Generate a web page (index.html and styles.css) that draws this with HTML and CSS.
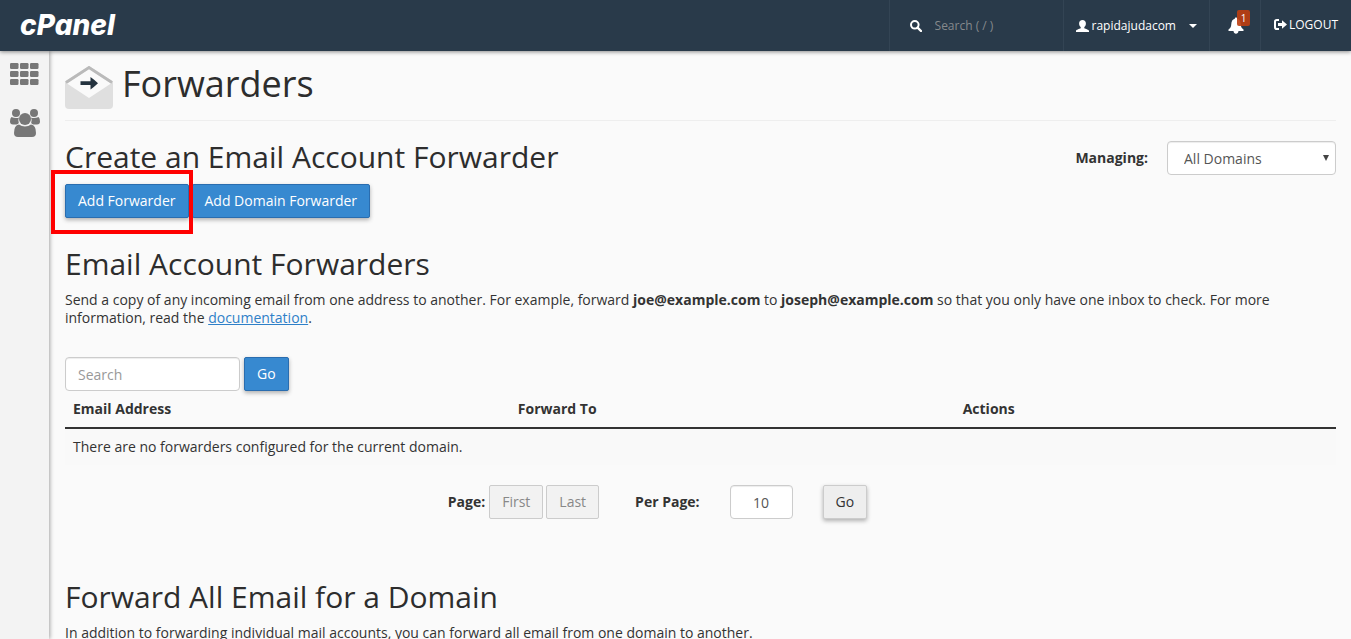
FILE: index.html
```html
<!DOCTYPE html>
<html lang="en">
<head>
<meta charset="utf-8">
<title>cPanel - Forwarders</title>
<link rel="stylesheet" href="styles.css">
</head>
<body>
<header class="topbar">
  <a class="brand" href="#">cPanel</a>
  <nav class="topnav">
    <label class="quick-search">
      <svg width="12" height="12" viewBox="0 0 12 12" aria-hidden="true"><circle cx="4.8" cy="4.8" r="3.8" fill="none" stroke="#fff" stroke-width="2"/><path d="M7.6 7.6l3.4 3.4" stroke="#fff" stroke-width="2.4" stroke-linecap="round"/></svg>
      <input type="text" placeholder="Search ( / )" aria-label="Quick search">
    </label>
    <button class="nav-item user" type="button">
      <svg width="13" height="12" viewBox="0 0 13 12" aria-hidden="true"><path d="M6.5 0C8.600 0 9.900 1.400 9.900 3.400 9.900 5.200 9.100 6.400 8.300 7.100V8.200C9.700 9 13 9.500 13 11V12H0V11C0 9.500 3.300 9 4.700 8.200V7.100C3.900 6.400 3.100 5.200 3.100 3.400 3.100 1.400 4.400 0 6.500 0Z" fill="#fff"/></svg>
      <span>rapidajudacom</span>
      <svg class="caret" width="8" height="4" viewBox="0 0 8 4" aria-hidden="true"><path d="M0 0h8L4 4z" fill="#fff"/></svg>
    </button>
    <button class="nav-item alerts" type="button" aria-label="Notifications">
      <svg width="16" height="17" viewBox="0 0 16 17" aria-hidden="true"><path d="M8 0.500C8.700 0.500 9.200 1 9.200 1.700 11.500 2.300 12.600 4.200 12.700 7 12.800 10 13.800 11.300 15.500 12.600V14H0.500V12.600C2.200 11.300 3.200 10 3.300 7 3.400 4.200 4.500 2.300 6.800 1.700 6.800 1 7.300 0.500 8 0.500ZM5.500 14H10.500C10.300 15.800 9.300 16.700 8 16.700S5.700 15.800 5.500 14Z" fill="#fff"/></svg>
      <span class="badge">1</span>
    </button>
    <a class="nav-item logout" href="#">
      <svg width="13" height="11" viewBox="0 0 13 11" aria-hidden="true"><path d="M5 1H2.800Q1 1 1 2.800V8.200Q1 10 2.800 10H5" fill="none" stroke="#fff" stroke-width="2"/><path d="M4 3.900H8V1.300L13 5.500 8 9.700V7.100H4Z" fill="#fff"/></svg>
      <span>LOGOUT</span>
    </a>
  </nav>
</header>
<div class="shell">
  <aside class="sidebar">
    <a href="#" aria-label="Tools">
      <svg width="29" height="22" viewBox="0 0 29 22" fill="#777"><rect width="8.500" height="6" rx="1.200"/><rect x="10" width="8.500" height="6" rx="1.200"/><rect x="20" width="8.500" height="6" rx="1.200"/><rect y="8" width="8.500" height="6" rx="1.200"/><rect x="10" y="8" width="8.500" height="6" rx="1.200"/><rect x="20" y="8" width="8.500" height="6" rx="1.200"/><rect y="16" width="8.500" height="6" rx="1.200"/><rect x="10" y="16" width="8.500" height="6" rx="1.200"/><rect x="20" y="16" width="8.500" height="6" rx="1.200"/></svg>
    </a>
    <a href="#" aria-label="User manager">
      <svg width="30" height="28" viewBox="0 0 30 28" fill="#777"><circle cx="6" cy="4" r="4"/><circle cx="24" cy="4" r="4"/><path d="M1.500 8Q3.500 9 6 9T9 8.500Q7.700 11 8.800 14 8 15 6.500 15.500H3Q0 15.500 0 12.500 0 9 1.500 8ZM28.500 8Q26.500 9 24 9T21 8.500Q22.300 11 21.200 14 22 15 23.500 15.500H27Q30 15.500 30 12.500 30 9 28.500 8Z"/><circle cx="15" cy="10" r="6"/><path d="M9 15.500Q11.500 17.500 15 17.500T21 15.500Q26 16 26 24 26 28 22 28H8Q4 28 4 24 4 16 9 15.500Z"/></svg>
    </a>
  </aside>
  <main class="content">
    <h1 class="page-title">
      <svg width="48" height="43" viewBox="0 0 48 43" aria-hidden="true"><path d="M0 15.500L24 0 48 15.500V39Q48 43 44 43H4Q0 43 0 39Z" fill="#dfdfdf"/><path d="M2 17.500L24 3 46 17.500 24 32Z" fill="#fafafa"/><path d="M1 16.500L24 1.500 47 16.500" fill="none" stroke="#bababa" stroke-width="2.800"/><path d="M15.500 15.300H25.500V11Q29 13.500 33 17.200 29 21 25.500 23.500V19H15.500Z" fill="#24333f"/></svg>
      <span>Forwarders</span>
    </h1>
    <section class="create">
      <div>
        <h2>Create an Email Account Forwarder</h2>
        <div class="button-row">
          <span class="highlighted"><a class="btn primary" href="#">Add Forwarder</a></span>
          <a class="btn primary" href="#">Add Domain Forwarder</a>
        </div>
      </div>
      <div class="managing">
        <label for="domain">Managing:</label>
        <span class="select-wrap">
          <select id="domain" class="field"><option>All Domains</option></select>
          <svg width="6" height="6" viewBox="0 0 6 6" aria-hidden="true"><path d="M0 0h6L3 6z" fill="#444"/></svg>
        </span>
      </div>
    </section>
    <section class="accounts">
      <h2>Email Account Forwarders</h2>
      <p>Send a copy of any incoming email from one address to another. For example, forward <strong>joe@example.com</strong> to <strong>joseph@example.com</strong> so that you only have one inbox to check. For more information, read the <a href="#">documentation</a>.</p>
      <form class="search-form">
        <input class="field" type="text" placeholder="Search" aria-label="Search forwarders">
        <button class="btn primary" type="button">Go</button>
      </form>
      <table class="forwarders">
        <thead><tr><th>Email Address</th><th>Forward To</th><th>Actions</th></tr></thead>
        <tbody><tr><td colspan="3">There are no forwarders configured for the current domain.</td></tr></tbody>
      </table>
      <form class="pager">
        <div class="pages">
          <strong>Page:</strong>
          <div class="page-buttons">
            <button class="btn" type="button" disabled>First</button>
            <button class="btn" type="button" disabled>Last</button>
          </div>
        </div>
        <div class="per-page">
          <label for="per-page">Per Page:</label>
          <input id="per-page" class="field" type="text" value="10">
          <button class="btn plain" type="button">Go</button>
        </div>
      </form>
    </section>
    <section>
      <h2>Forward All Email for a Domain</h2>
      <p>In addition to forwarding individual mail accounts, you can forward all email from one domain to another.</p>
    </section>
  </main>
</div>
</body>
</html>
```
FILE: styles.css
```css
* { box-sizing: border-box; }
body {
  margin: 0;
  height: 100vh;
  overflow: hidden;
  display: flex;
  flex-direction: column;
  background: #fafafa;
  color: #333;
  font: 14px/18px "Open Sans", sans-serif;
}
button, input, select { font: inherit; color: inherit; }
svg { display: block; flex: none; }
h1, h2 { margin: 0; font-weight: 400; color: #2d2d2d; }
h2 { font-size: 30px; line-height: 34px; }
p { margin: 0; }

.topbar {
  flex: none;
  height: 51px;
  display: flex;
  justify-content: space-between;
  background: #293a4a;
  color: #fff;
  box-shadow: 0 1px 4px rgba(0, 0, 0, .45);
  z-index: 2;
}
.brand {
  padding-left: 20px;
  color: #fff;
  font: italic 800 28px/51px Inter, sans-serif;
  text-decoration: none;
}
.topnav { display: flex; font-size: 12px; }
.quick-search, .nav-item {
  display: flex;
  align-items: center;
  border: 0;
  border-left: 1px solid #334454;
  background: none;
  color: #fff;
  text-decoration: none;
}
.quick-search { width: 174px; padding-left: 20px; gap: 13px; }
.quick-search input {
  width: 120px;
  padding: 0;
  border: 0;
  background: none;
  color: #fff;
}
.quick-search input::placeholder { color: #85898c; opacity: 1; }
.user { padding: 0 12px; gap: 3px; }
.caret { margin-left: 10px; }
.alerts { position: relative; width: 51px; padding: 0 18px; }
.badge {
  position: absolute;
  top: 10px;
  left: 27px;
  width: 13px;
  border-radius: 2px;
  background: rgba(190, 62, 15, .9);
  font-size: 10px;
  line-height: 16px;
  text-align: center;
}
.logout { padding: 0 13px; gap: 2px; padding-bottom: 2px; }

.shell { flex: 1; min-height: 0; display: flex; }
.sidebar {
  flex: none;
  width: 49px;
  padding: 12px 10px;
  display: flex;
  flex-direction: column;
  gap: 24px;
  background: #f3f3f3;
  box-shadow: 1px 0 4px rgba(0, 0, 0, .35);
}
.content { flex: 1; min-width: 0; padding: 7px 15px 0 16px; overflow: hidden; }

.page-title {
  display: flex;
  align-items: center;
  gap: 9px;
  height: 63px;
  padding: 0 0 11px;
  border-bottom: 1px solid #eee;
  font-size: 36px;
  line-height: 50px;
}
.page-title svg { margin-top: 8px; }
.create { display: flex; justify-content: space-between; padding-top: 19px; }
.button-row { display: flex; gap: 3px; padding-top: 10px; }
.highlighted { position: relative; display: flex; }
.highlighted::after {
  content: "";
  position: absolute;
  inset: -14px -4px -16px -14px;
  border: 4px solid #f00;
}
.btn {
  height: 34px;
  padding: 7px 12px;
  border: 1px solid #ccc;
  border-radius: 2px;
  background: #eee;
  color: #333;
  text-decoration: none;
}
.btn.primary {
  border-color: #2a6daf;
  background: #3789d0;
  color: #fff;
}
.btn.primary, .btn.plain { box-shadow: 0 2px 4px rgba(0, 0, 0, .3); }
.btn:disabled { background: #f2f2f2; color: #888; }
.field {
  height: 34px;
  padding: 6px 12px;
  border: 1px solid #ccc;
  border-radius: 4px;
  background: #fff;
  color: #555;
  box-shadow: inset 0 1px 1px rgba(0, 0, 0, .075);
}
.field::placeholder { color: #999; opacity: 1; }
.managing { display: flex; align-items: center; gap: 19px; height: 36px; }
.managing label, .pager strong, .per-page label { font-weight: 700; }
.select-wrap { position: relative; }
.select-wrap select { display: block; width: 169px; padding: 7px 16px 6px; appearance: none; }
.select-wrap svg { position: absolute; right: 7px; top: 14px; pointer-events: none; }

.accounts { padding: 29px 0 61px; }
h2 + p { padding-top: 10px; }
p a { color: #2f80c8; text-decoration: underline; }
.search-form { display: flex; gap: 4px; padding-top: 30px; }
.search-form input { width: 175px; }
.forwarders { width: 100%; table-layout: fixed; border-collapse: collapse; }
.forwarders th { padding: 9px 8px; border-bottom: 2px solid #333; text-align: left; }
.forwarders th:not(:last-child) { width: 35%; }
.forwarders td { padding: 9px 8px; background: #f9f9f9; }
.pager { display: flex; justify-content: center; align-items: flex-start; gap: 36px; padding: 20px 86px 0 0; }
.pages, .page-buttons, .per-page { display: flex; align-items: center; }
.pages { gap: 4px; }
.page-buttons { gap: 3px; }
.per-page { gap: 30px; }
.per-page input { width: 63px; text-align: center; }
```
